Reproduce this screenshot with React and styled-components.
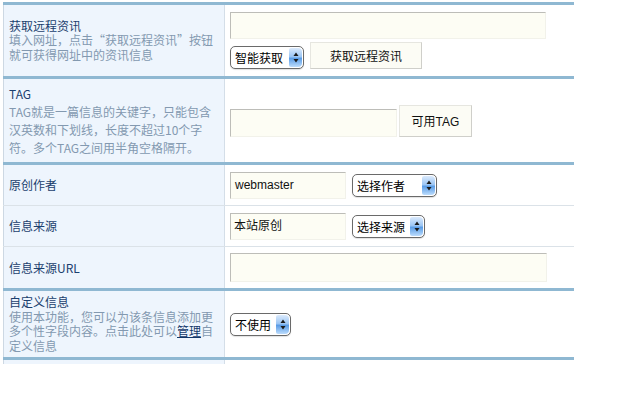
import React from "react";
import styled, { createGlobalStyle } from "styled-components";

const Global = createGlobalStyle`
  body { margin: 0; background: #fff; }
  * { box-sizing: border-box; }
`;

const FONT = `"Liberation Sans", "Noto Sans CJK SC", sans-serif`;

const Page = styled.div`
  width: 571px;
  margin: 2px 0 0 3px;
  font-family: ${FONT};
  font-size: 12px;
`;

const Row = styled.div`
  display: grid;
  grid-template-columns: 222px 1fr;
  height: ${(p) => p.$h}px;
  border-top: ${(p) => (p.$thick ? "3px solid #8fb8d2" : "1px solid #dbe2e8")};
`;

const Label = styled.div`
  background: #eef5fd;
  border-left: 1px solid #cdd8e3;
  border-right: 1px solid #d4dee8;
  padding-left: 5px;
  display: flex;
  flex-direction: column;
  justify-content: center;
  line-height: ${(p) => p.$lh || 14}px;
  font-family: "Noto Sans CJK SC", sans-serif;
`;

const Title = styled.div`
  color: #1b3f6e;
`;

const Desc = styled.div`
  color: #8399b0;
`;

const Link = styled.a`
  color: #13386a;
  text-decoration: underline;
`;

const Field = styled.div`
  padding-left: 5px;
  display: flex;
  flex-direction: column;
  justify-content: center;
  gap: 3px;
`;

const Line = styled.div`
  display: flex;
  align-items: ${(p) => p.$align || "center"};
  gap: ${(p) => p.$gap ?? 6}px;
`;

const Input = styled.div`
  width: ${(p) => p.$w}px;
  height: ${(p) => p.$h || 27}px;
  background: #fdfdf4;
  border: 1px solid;
  border-color: #bdbdb8 #f2f2ea #f2f2ea #bdbdb8;
  color: #111;
  padding: ${(p) => (p.$top ? "2px 3px" : "0 4px")};
  display: flex;
  align-items: ${(p) => (p.$top ? "flex-start" : "center")};
  font-family: ${FONT};
  font-size: 12px;
`;

const Button = styled.div`
  width: ${(p) => p.$w}px;
  height: ${(p) => p.$h}px;
  background: #fcfcf5;
  border: 1px solid;
  border-color: #e6e6e0 #cfcfca #cfcfca #e6e6e0;
  color: #111;
  display: flex;
  align-items: center;
  justify-content: center;
  font-family: ${FONT};
  font-size: 12px;
`;

const SelectBox = styled.div`
  width: ${(p) => p.$w}px;
  height: 23px;
  border: 1px solid #6a6a6a;
  border-radius: 5px;
  background: #fff;
  display: flex;
  align-items: center;
  justify-content: space-between;
  padding-left: 4px;
  color: #000;
  font-family: "Noto Sans CJK SC", sans-serif;
  font-size: 12px;
  box-shadow: 0 1px 1px rgba(0, 0, 0, 0.12);
`;

const Stepper = styled.span`
  width: 13px;
  height: 19px;
  margin-right: 1px;
  border-radius: 2px 4px 4px 2px;
  background: linear-gradient(to bottom, #dbeafc 0%, #9cc6f4 45%, #5b9de6 55%, #bcdcfc 100%);
  display: flex;
  align-items: center;
  justify-content: center;
`;

const Tail = styled.div`
  height: 7px;
  border-top: 3px solid #8fb8d2;
  display: grid;
  grid-template-columns: 222px 1fr;
`;

const TailLeft = styled.div`
  background: #eef5fd;
  border-left: 1px solid #cdd8e3;
  border-right: 1px solid #d4dee8;
`;

function Select({ w, children }) {
  return (
    <SelectBox $w={w}>
      <span>{children}</span>
      <Stepper>
        <svg width="6" height="11" viewBox="0 0 6 11">
          <path d="M3 0.5 L5.5 4 L0.5 4 Z" fill="#1a1a1a" />
          <path d="M3 10.5 L5.5 7 L0.5 7 Z" fill="#1a1a1a" />
        </svg>
      </Stepper>
    </SelectBox>
  );
}

export default function App() {
  return (
    <>
      <Global />
      <Page>
        <Row $thick $h={74}>
          <Label $lh={14.5}>
            <Title>获取远程资讯</Title>
            <Desc>
              填入网址，点击“获取远程资讯”按钮
              <br />
              就可获得网址中的资讯信息
            </Desc>
          </Label>
          <Field>
            <Input $w={316} />
            <Line $align="flex-end">
              <Select w={74}>智能获取</Select>
              <Button $w={112} $h={27}>获取远程资讯</Button>
            </Line>
          </Field>
        </Row>

        <Row $thick $h={86}>
          <Label $lh={18}>
            <Title>TAG</Title>
            <Desc>
              TAG就是一篇信息的关键字，只能包含
              <br />
              汉英数和下划线，长度不超过10个字
              <br />
              符。多个TAG之间用半角空格隔开。
            </Desc>
          </Label>
          <Field>
            <Line $align="flex-end" $gap={2}>
              <Input $w={167} $h={28} />
              <Button $w={73} $h={32}>可用TAG</Button>
            </Line>
          </Field>
        </Row>

        <Row $thick $h={43}>
          <Label>
            <Title>原创作者</Title>
          </Label>
          <Field>
            <Line>
              <Input $w={116}>webmaster</Input>
              <Select w={85}>选择作者</Select>
            </Line>
          </Field>
        </Row>

        <Row $h={41}>
          <Label>
            <Title>信息来源</Title>
          </Label>
          <Field>
            <Line>
              <Input $w={116} $top>本站原创</Input>
              <Select w={73}>选择来源</Select>
            </Line>
          </Field>
        </Row>

        <Row $h={42}>
          <Label>
            <Title>信息来源URL</Title>
          </Label>
          <Field>
            <Input $w={317} $h={29} />
          </Field>
        </Row>

        <Row $thick $h={69}>
          <Label $lh={14.5}>
            <Title>自定义信息</Title>
            <Desc>
              使用本功能，您可以为该条信息添加更
              <br />
              多个性字段内容。点击此处可以<Link href="#">管理</Link>自
              <br />
              定义信息
            </Desc>
          </Label>
          <Field>
            <Line>
              <Select w={61}>不使用</Select>
            </Line>
          </Field>
        </Row>

        <Tail>
          <TailLeft />
          <div />
        </Tail>
      </Page>
    </>
  );
}
